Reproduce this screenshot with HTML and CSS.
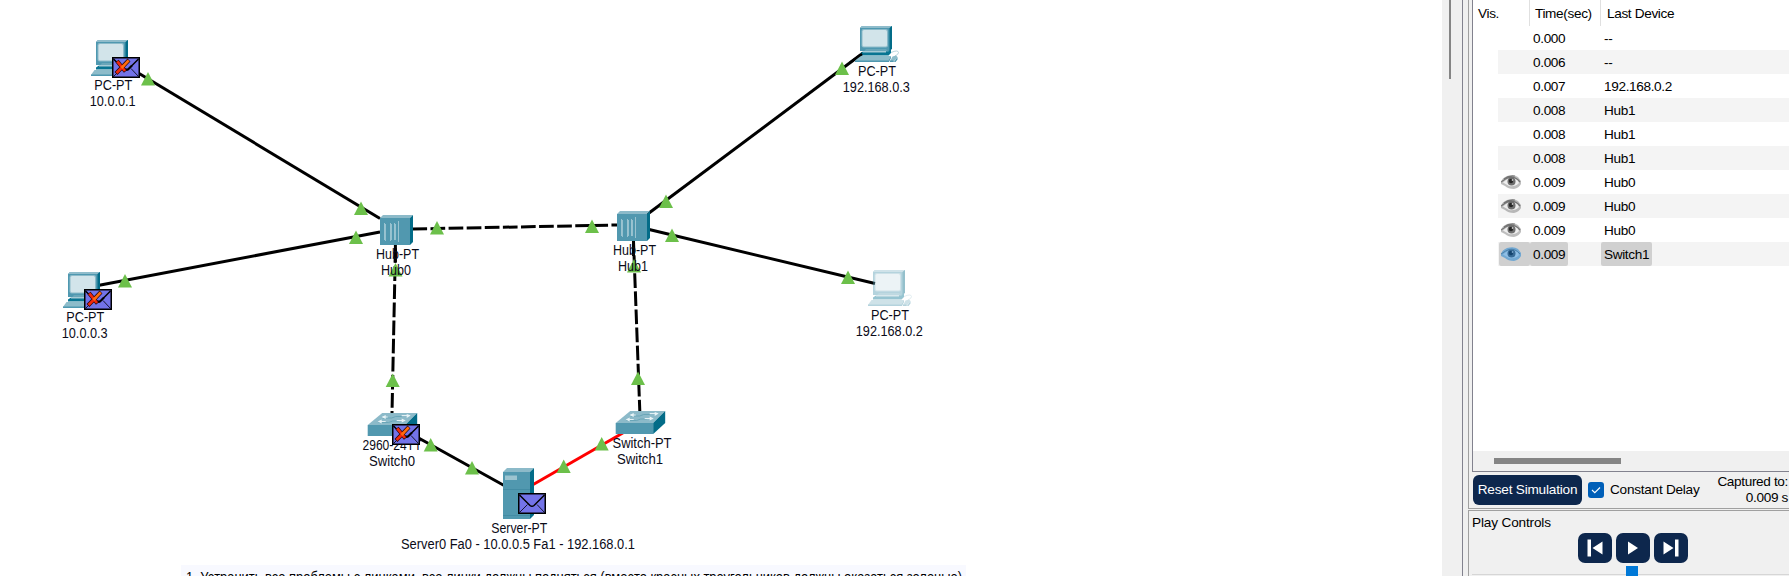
FILE: index.html
```html
<!DOCTYPE html>
<html lang="en">
<head>
<meta charset="utf-8">
<title>Network simulation</title>
<link rel="stylesheet" href="styles.css">
</head>
<body>
<div class="app">
<main class="workspace">
<svg class="topology" width="1442" height="576" viewBox="0 0 1442 576">
<defs>
<g id="pc">
<path fill="#4f98b0" d="M5 2 7 0H37V23L34 25H5Z"/><path fill="#8fbccb" d="M5 2 7 0H37L35 2Z"/><path fill="#036c88" d="M34.5 2 37 0V22.500L34.500 25Z"/>
<rect x="6.500" y="3" width="26.500" height="18.500" rx="2" fill="#8cbac9"/><rect x="7.500" y="4" width="24.500" height="16.500" rx="1.500" fill="#d2e4ea"/>
<path fill="#69a6b9" d="M11 23H31L34 26.500H8Z"/><path fill="#087592" d="M8 25.500H33L36 23V27L33.500 29.500H5V27.500Z"/><path fill="#a5cad5" d="M8 25H31V26.500H8Z"/>
<path fill="#8dbcca" d="M3.500 30H36L33.500 35H0Z"/><path fill="#4f98b0" d="M0 34.500H33.500L36 30V32L34 36H0Z"/>
<path fill="none" stroke="#b9d5dd" d="M36 26.500Q43 23.500 43.500 26.500Q43.500 28.500 40 30"/><path fill="#8dbcca" d="M37.500 30.500 41 29.500 42.500 31 39 35.500H35Z"/><path fill="#4f98b0" d="M39 36 42.500 31V33.500L40.500 36H35V34.500H38Z"/>
</g>
<g id="hub">
<path fill="#5198af" d="M0 3H30V30H0Z"/><path fill="#8cbac9" d="M0 3 3 0H33L30 3Z"/><path fill="#036c88" d="M30 3 33 0V27L30 30Z"/>
<path stroke="#9ac3d0" d="M4.500 8V25M10.500 8V26M14.500 8V25M18.500 6V27"/><path stroke="#c5dde4" stroke-width=".6" d="M5.500 9V26M11.500 9V25M15.500 9V25"/>
</g>
<g id="switch">
<path fill="#5198af" d="M0 12H37.500V23H0Z"/><path fill="#8cbac9" d="M0 12 14.500 0H49.500L37.500 12Z"/><path fill="#036c88" d="M37.500 12 49.500 0V12L37.500 23Z"/>
<path fill="none" stroke="#6aa6b8" stroke-width="1" d="M15 5H24L28 3.500H34M11 9.500H21L25 8H31"/>
<path fill="none" stroke="#e3f0f4" stroke-width="1" d="M15 4H20M34 2.500H42M12 8.500H18M29 7.500H36"/><path fill="#e9f4f7" d="M14 4 18 2V6ZM43 2.500 39 1V5ZM10 8.500 14 6.500V10.500ZM38 7.500 34 5.500V9.500Z"/>
</g>
<g id="server">
<path fill="#5198af" d="M0 4H27V51H0Z"/><path fill="#8cbac9" d="M0 4 4 0H31L27 4Z"/><path fill="#036c88" d="M27 4 31 0V47L27 51Z"/><path fill="#9cc4d0" d="M2 7.500H14V12H2Z"/><path stroke="#438ca4" d="M0 21.500H27M0 47.500H27"/>
</g>
<g id="mail">
<rect x=".75" y=".75" width="26.500" height="19.500" fill="#7373e8" stroke="#000" stroke-width="1.500"/>
<path fill="none" stroke="#000" stroke-width=".8" d="M1.500 19.500 9.500 11.500M26.500 19.500 19 11.500"/><path fill="none" stroke="#000" stroke-width="1.500" d="M1.500 2 12 12.500Q14 14 16 12.500L26.500 2"/>
</g>
<g id="mail-drop">
<use href="#mail"/>
<path fill="none" stroke="#000" stroke-width="2" d="M12 12.500H16L20 8.500"/>
<path fill="none" stroke="#24070e" stroke-width="4" d="M5 4 13.500 14.500M17 3 4 16.500"/><path fill="none" stroke="#f2280c" stroke-width="2.700" d="M5.300 4.400 13 14M12 8.500 4.500 16"/><path fill="none" stroke="#ff6b0c" stroke-width="2.700" d="M16.700 3.400 9.500 11"/>
</g>
<path id="up" fill="#6cc04a" d="M0 0 7 13.500H-7Z"/>
</defs>

<g class="link">
<path d="M130 68 380 218.500"/><path d="M90 287 380 232"/><path d="M645 216 863 53"/><path d="M645 228.500 875 283.500"/><path d="M415 436 505 486"/>
<path class="link-active" d="M628 430 528 487.500"/>
</g>
<g class="link link-cross">
<path stroke-dashoffset=".6" d="M413 229 617 225"/><path stroke-dashoffset="-3.200" d="M395.500 245 392 413"/><path stroke-dashoffset="-14.200" d="M633.500 241 639.800 411"/>
<path class="link-stub" d="M395.400 245V262M633.500 241V256"/>
</g>

<use href="#pc" x="91" y="40"/><use href="#pc" x="63" y="272"/><use href="#pc" x="855" y="26"/><use href="#pc" x="868" y="270" opacity=".42"/>
<path class="link-end" d="M850 62.700 862 53.800"/>
<use href="#hub" x="380" y="215"/><use href="#hub" x="617" y="211"/>
<use href="#switch" x="367.700" y="413"/><use href="#switch" x="615.700" y="411"/>
<use href="#server" x="503" y="468"/>

<use href="#up" x="148" y="72"/><use href="#up" x="125" y="274"/><use href="#up" x="361" y="201.500"/><use href="#up" x="356" y="230.500"/>
<use href="#up" x="437" y="221"/><use href="#up" x="592" y="219.500"/><use href="#up" x="666" y="194.500"/><use href="#up" x="672" y="228.500"/>
<use href="#up" x="395.500" y="263"/><use href="#up" x="634" y="259"/><use href="#up" x="392.700" y="373.500"/><use href="#up" x="638" y="371.500"/>
<use href="#up" x="430.700" y="438"/><use href="#up" x="472" y="461"/><use href="#up" x="601.700" y="437"/><use href="#up" x="563.700" y="459.500"/>
<use href="#up" x="842" y="61.500"/><use href="#up" x="848" y="270.500"/>

<g class="label">
<text x="113.300" y="90" textLength="38" lengthAdjust="spacingAndGlyphs">PC-PT</text><text x="112.700" y="106" textLength="46" lengthAdjust="spacingAndGlyphs">10.0.0.1</text>
<text x="85.300" y="322" textLength="38" lengthAdjust="spacingAndGlyphs">PC-PT</text><text x="84.700" y="338" textLength="46" lengthAdjust="spacingAndGlyphs">10.0.0.3</text>
<text x="877" y="76" textLength="38" lengthAdjust="spacingAndGlyphs">PC-PT</text><text x="876.300" y="92" textLength="67" lengthAdjust="spacingAndGlyphs">192.168.0.3</text>
<text x="890" y="320" textLength="38" lengthAdjust="spacingAndGlyphs">PC-PT</text><text x="889.300" y="336" textLength="67" lengthAdjust="spacingAndGlyphs">192.168.0.2</text>
<text x="397.500" y="259" textLength="43" lengthAdjust="spacingAndGlyphs">Hub-PT</text><text x="396" y="275" textLength="30" lengthAdjust="spacingAndGlyphs">Hub0</text>
<text x="634.500" y="255" textLength="43" lengthAdjust="spacingAndGlyphs">Hub-PT</text><text x="633" y="271" textLength="30" lengthAdjust="spacingAndGlyphs">Hub1</text>
<text x="392" y="450" textLength="59" lengthAdjust="spacingAndGlyphs">2960-24TT</text><text x="392" y="466" textLength="46" lengthAdjust="spacingAndGlyphs">Switch0</text>
<text x="642" y="448" textLength="59" lengthAdjust="spacingAndGlyphs">Switch-PT</text><text x="640" y="464" textLength="46" lengthAdjust="spacingAndGlyphs">Switch1</text>
<text x="519.300" y="533" textLength="56" lengthAdjust="spacingAndGlyphs">Server-PT</text><text x="518" y="549" textLength="234" lengthAdjust="spacingAndGlyphs">Server0 Fa0 - 10.0.0.5 Fa1 - 192.168.0.1</text>
</g>

<use href="#mail-drop" x="112" y="57"/><use href="#mail-drop" x="84" y="289"/><use href="#mail-drop" x="392" y="424"/><use href="#mail" x="518" y="493"/>

<rect class="note" x="181" y="565" width="785" height="20"/>
<text class="note-text" x="186" y="582" textLength="776" lengthAdjust="spacingAndGlyphs">1. Устранить все проблемы с линками, все линки должны подняться (вместо красных треугольников должны оказаться зеленые)</text>
</svg>
</main>
<div class="scroll"><div class="scroll-thumb"></div></div>
<aside class="panel">
<section class="events">
<div class="list">
<div class="head"><span class="vis">Vis.</span><span class="time">Time(sec)</span><span class="device">Last Device</span></div>
<div class="row"><i class="eye"></i><b class="t">0.000</b><b class="d">--</b></div>
<div class="row alt"><i class="eye"></i><b class="t">0.006</b><b class="d">--</b></div>
<div class="row"><i class="eye"></i><b class="t">0.007</b><b class="d">192.168.0.2</b></div>
<div class="row alt"><i class="eye"></i><b class="t">0.008</b><b class="d">Hub1</b></div>
<div class="row"><i class="eye"></i><b class="t">0.008</b><b class="d">Hub1</b></div>
<div class="row alt"><i class="eye"></i><b class="t">0.008</b><b class="d">Hub1</b></div>
<div class="row"><i class="eye"><svg width="20" height="15" viewBox="0 0 20 15"><g id="eye-shape"><path fill="currentColor" opacity=".35" d="M0 7Q1 3 6 1Q13-1 17 2L20 6V9Q18 13 13 14Q7 14 4 11L0 9Z"/><path fill="#fff" opacity=".75" d="M2 7.500Q8 1.500 13 3Q17 4.500 18 8Q14 12 8 11Z"/><circle cx="10.500" cy="6.500" r="4" fill="currentColor" opacity=".75"/><circle cx="10" cy="6" r="2.200" fill="#111" opacity=".75"/><circle cx="11.500" cy="5" r=".8" fill="#fff"/><path fill="none" stroke="currentColor" stroke-width="1.200" opacity=".6" d="M0 7Q5 3.500 8 2.500Q14 1 19 7M3 4Q8 0 14 1"/></g></svg></i><b class="t">0.009</b><b class="d">Hub0</b></div>
<div class="row alt"><i class="eye"><svg width="20" height="15" viewBox="0 0 20 15"><use href="#eye-shape"/></svg></i><b class="t">0.009</b><b class="d">Hub0</b></div>
<div class="row"><i class="eye"><svg width="20" height="15" viewBox="0 0 20 15"><use href="#eye-shape"/></svg></i><b class="t">0.009</b><b class="d">Hub0</b></div>
<div class="row alt selected"><i class="eye"><svg width="20" height="15" viewBox="0 0 20 15"><path fill="#72a8d2" d="M0 7Q1 3 6 1Q13-1 17 2L20 6V9Q18 13 13 14Q7 14 4 11L0 9Z"/><path fill="#8fbfe6" d="M2 7.500Q8 1.500 13 3Q17 4.500 18 8Q14 12 8 11Z"/><circle cx="10.500" cy="6.500" r="4" fill="#386b96"/><circle cx="10" cy="6" r="2.200" fill="#15456f"/><circle cx="11.500" cy="5" r=".8" fill="#9fcaed"/><path fill="none" stroke="#4a80aa" d="M0 7Q5 3.500 8 2.500Q14 1 19 7"/></svg></i><b class="t">0.009</b><b class="d">Switch1</b></div>
<div class="hscroll"><div class="hthumb"></div></div>
</div>
<div class="actions">
<button class="reset">Reset Simulation</button>
<span class="check"><svg width="16" height="16"><path fill="none" stroke="#fff" stroke-width="1.100" d="m4 8 2.800 2.700L12 5.500"/></svg></span>
<span class="delay">Constant Delay</span>
<span class="captured">Captured to:<br>0.009 s</span>
</div>
</section>
<section class="play">
<div class="title">Play Controls</div>
<div class="buttons">
<button class="ctl"><svg width="34" height="30"><path fill="#fff" d="M9.500 6.500H13V23.500H9.500ZM24.500 8.500V21.500L14.500 15Z"/></svg></button>
<button class="ctl"><svg width="34" height="30"><path fill="#fff" d="M12 8.500V21.500L22 15Z"/></svg></button>
<button class="ctl"><svg width="34" height="30"><path fill="#fff" d="M21 6.500H24.500V23.500H21ZM9.500 8.500V21.500L19.500 15Z"/></svg></button>
</div>
<div class="slider"><div class="handle"></div></div>
</section>
</aside>
</div>
</body>
</html>
```
FILE: styles.css
```css
* { box-sizing: border-box; }
body { margin: 0; overflow: hidden; font: 13.600px/16px "Liberation Sans", Arial, sans-serif; letter-spacing: -.35px; color: #000; background: #fff; }
.app { display: flex; width: 1789px; height: 576px; overflow: hidden; background: #f0f0f0; }
.workspace { width: 1442px; flex: none; background: #fff; }
.topology { display: block; letter-spacing: 0; }
.link path { fill: none; stroke: #000; stroke-width: 3; }
.link .link-active { stroke: #f00; }
.link-cross path { stroke-dasharray: 14.700 3.400; }
.link-cross .link-stub { stroke-dasharray: none; }
.link-end { stroke: #000; stroke-width: 2.300; }
.label text { text-anchor: middle; fill: #0b0b18; font-size: 14px; }
.note { fill: #f8f9ff; }
.note-text { font-size: 14px; }
.scroll { width: 20px; flex: none; padding-left: 7px; }
.scroll-thumb { width: 2px; height: 79px; background: #858585; }
.panel { flex: none; width: 327px; border-left: 1px solid #82828e; padding-left: 5px; display: flex; flex-direction: column; white-space: nowrap; }
.events { height: 509px; flex: none; border-left: 1px solid #a0a0a0; border-bottom: 1px solid #a0a0a0; padding-left: 3px; }
.list { height: 472px; border-left: 1px solid #82828e; border-bottom: 1px solid #82828e; background: #fff; display: flex; flex-direction: column; }
.head { display: flex; height: 26px; flex: none; line-height: 28px; }
.vis { width: 57px; padding-left: 5px; border-right: 1px solid #e0e0e0; }
.time { width: 71px; padding-left: 5px; border-right: 1px solid #e0e0e0; }
.device { padding-left: 6px; }
.row { display: flex; height: 24px; flex: none; margin-left: 25px; line-height: 25px; }
.row b { font-weight: normal; }
.alt { background: #f4f4f4; }
.eye { display: block; width: 31px; margin-left: 1px; padding: 5px 0 0 2px; color: #444; }
.eye svg { display: block; }
.t { width: 38px; padding-left: 3px; margin-right: 33px; }
.d { padding: 0 3px; }
.selected .eye, .selected .t, .selected .d { background: #d0d0d0; border-radius: 2px; }
.hscroll { margin-top: auto; height: 20px; background: #f0f0f0; padding: 7px 0 0 21px; }
.hthumb { width: 127px; height: 6px; background: #858585; }
.actions { display: flex; align-items: center; height: 36px; padding: 0 1px 0 1px; }
button { border: 0; padding: 0; font: inherit; letter-spacing: -.2px; color: #fff; background: #0d274d; }
.reset { width: 109px; height: 30px; border-radius: 6px; margin-right: 6px; }
.check { width: 16px; height: 16px; border-radius: 3px; background: #005fb8; margin-right: 6px; }
.check svg { display: block; }
.delay { letter-spacing: -.25px; }
.captured { margin-left: auto; text-align: right; }
.play { flex: 1; margin-top: 1px; border-left: 1px solid #a0a0a0; border-top: 1px solid #a0a0a0; padding: 3px 0 0 3px; }
.title { height: 16px; margin-top: 1px; line-height: 16px; letter-spacing: -.15px; }
.buttons { display: flex; gap: 4px; margin: 2px 0 0 106px; }
.ctl { width: 34px; height: 30px; border-radius: 7px; }
.ctl svg { display: block; }
.slider { margin-top: 3px; height: 10px; background: linear-gradient(#d6d6d6, #d6d6d6) 0 8px / 100% 1px no-repeat; }
.handle { width: 12px; height: 10px; margin-left: 154px; background: #0078d7; }
```
